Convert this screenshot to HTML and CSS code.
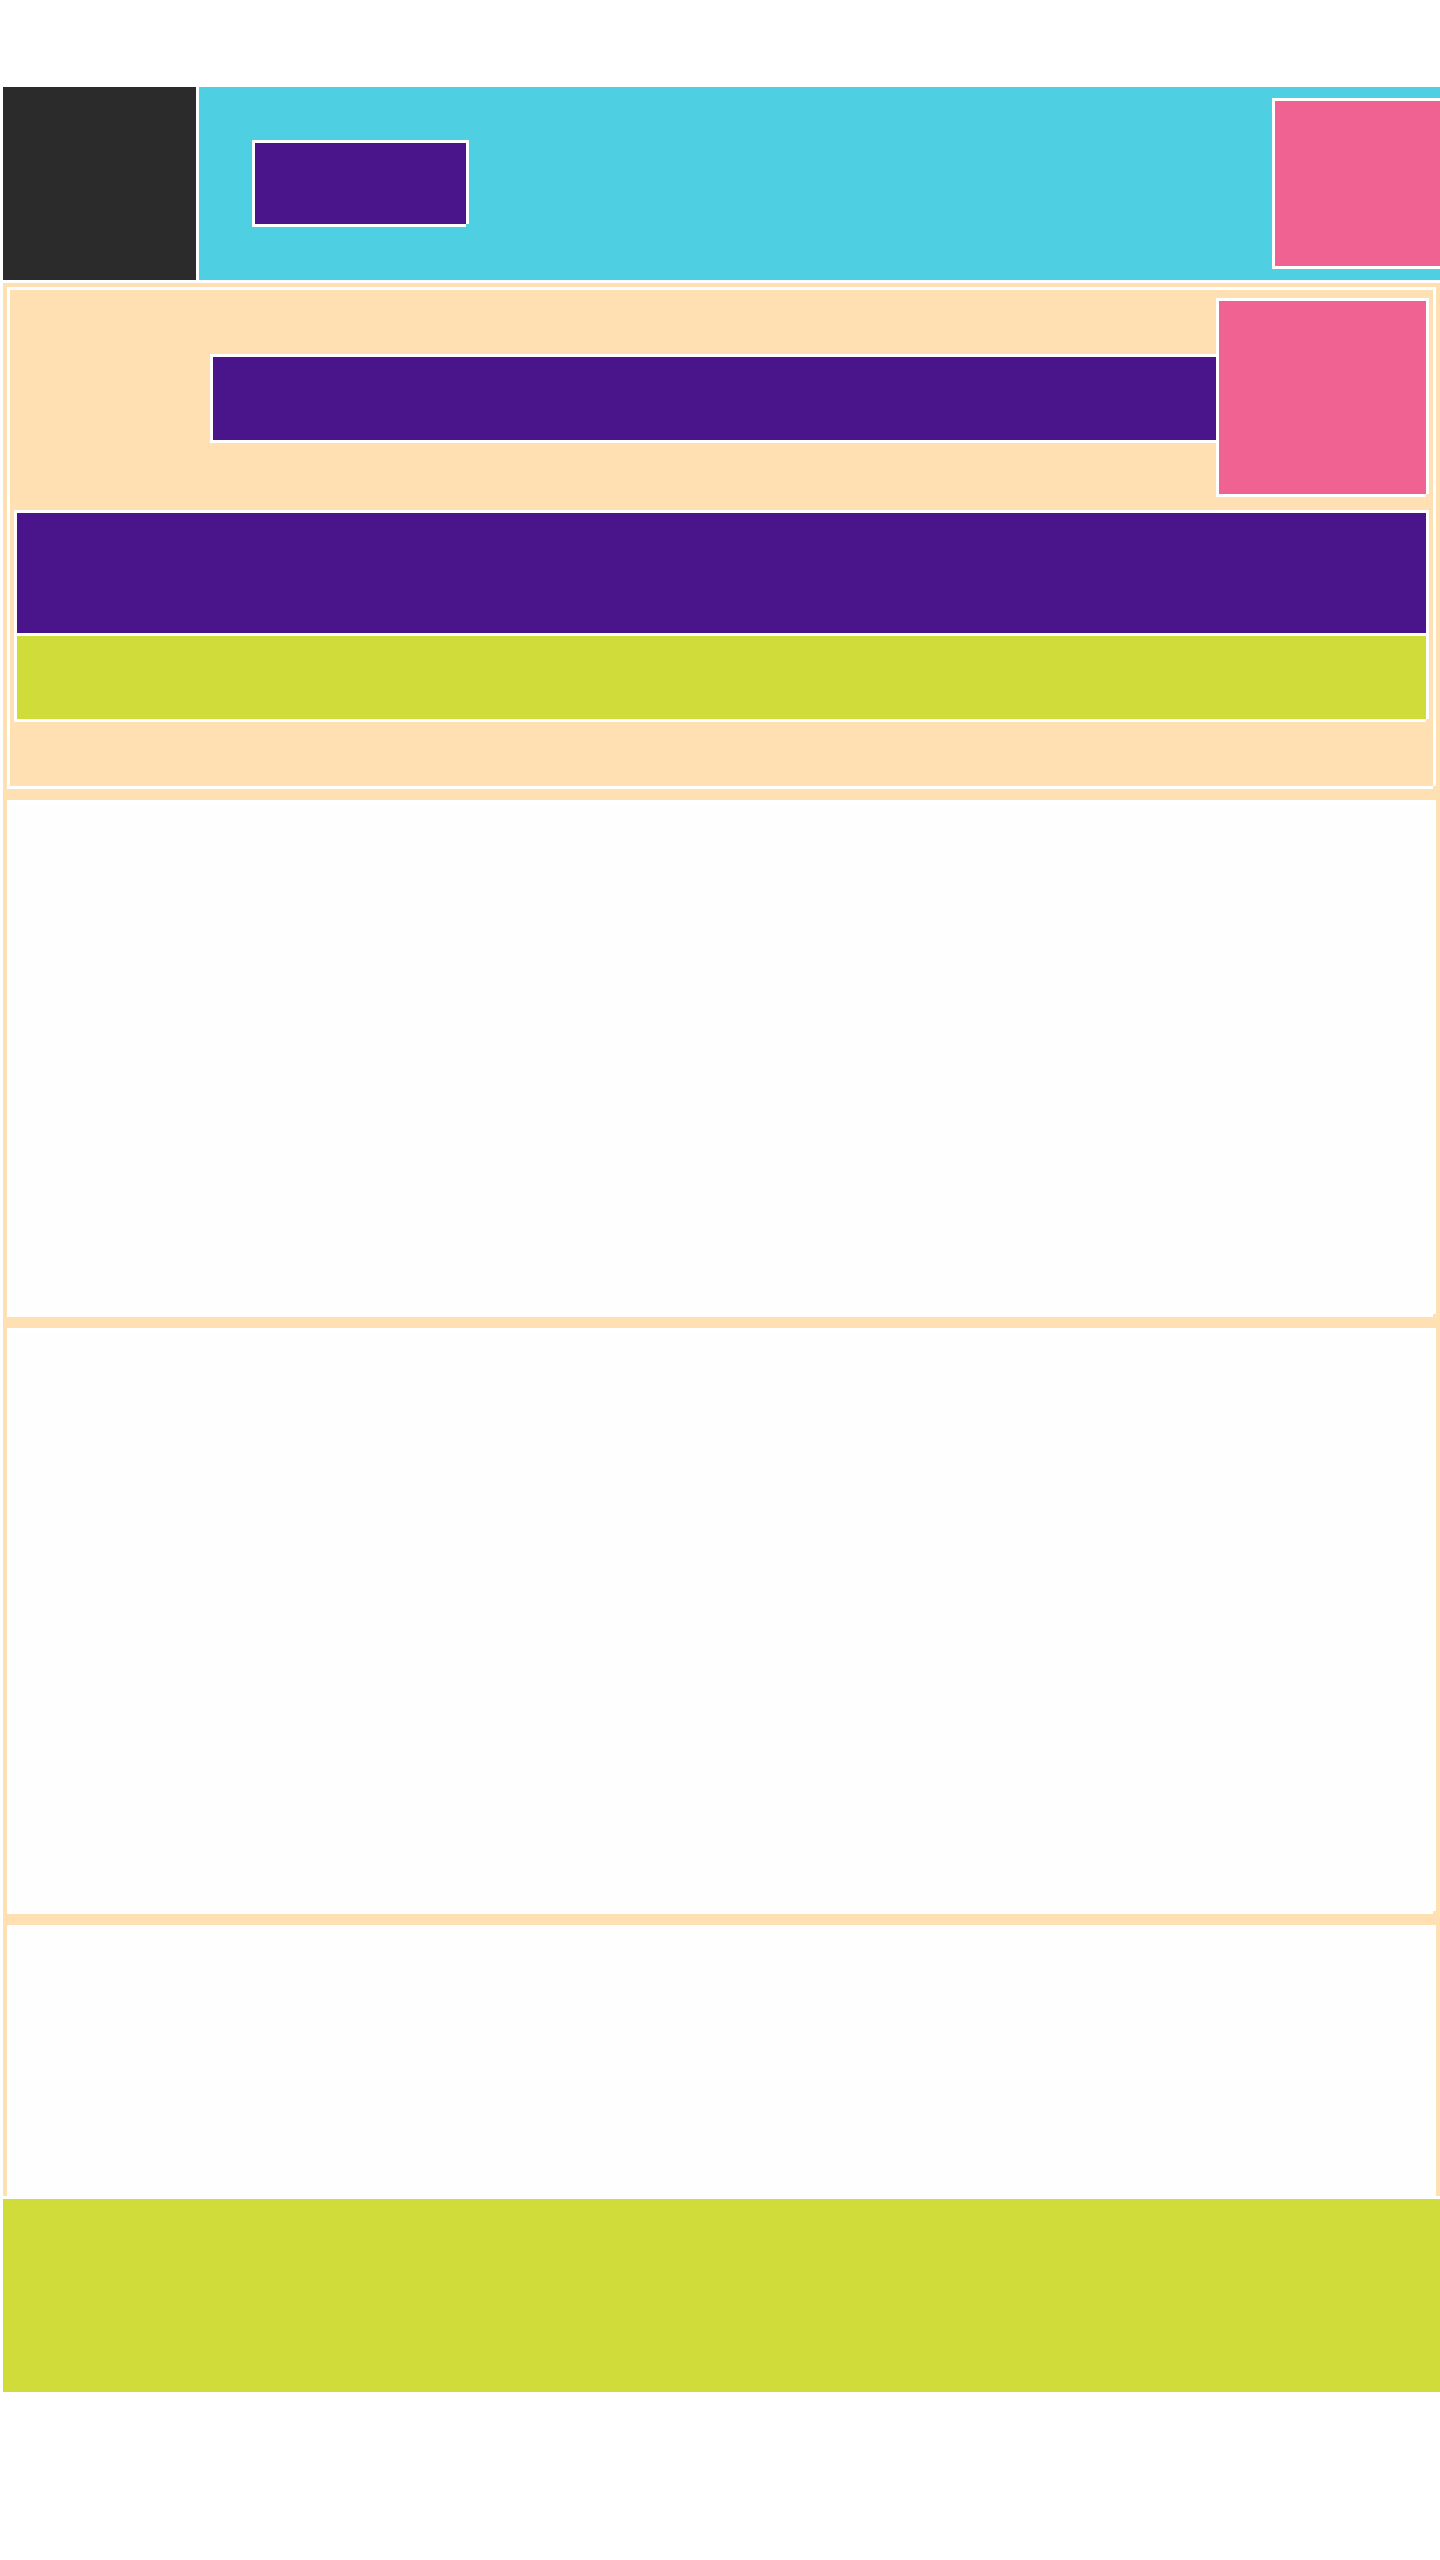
FILE: index.html
```html
<!DOCTYPE html>
<html lang="en">
<head>
<meta charset="utf-8">
<title>Layout</title>
<link rel="stylesheet" href="styles.css">
</head>
<body>
<div class="page">
  <header class="header">
    <div class="brand"></div>
    <div class="topbar">
      <div class="box nav-btn"></div>
      <div class="box top-badge"></div>
    </div>
  </header>
  <main class="main">
    <section class="box hero">
      <div class="hero-row">
        <div class="box hero-title"></div>
        <div class="box hero-image"></div>
      </div>
      <div class="box hero-panel">
        <div class="hero-panel-top"></div>
        <div class="hero-panel-bottom"></div>
      </div>
    </section>
    <section class="box card card-1"></section>
    <section class="box card card-2"></section>
    <section class="box card card-3"></section>
  </main>
  <footer class="footer"></footer>
</div>
</body>
</html>
```

FILE: styles.css
```css
html, body {
  margin: 0;
  padding: 0;
  background: #ffffff;
  overflow-x: hidden;
}

.page {
  width: 1440px;
  box-sizing: border-box;
  padding: 87px 0 0 3px;
  min-height: 2560px;
}

.box {
  box-sizing: border-box;
  border-top: 3px solid #ffffff;
  border-left: 3px solid #ffffff;
  box-shadow: 3px 0 0 0 #ffffff, 0 3px 0 0 #ffffff;
}

/* header */
.header {
  display: flex;
  gap: 3px;
  height: 193px;
  margin-bottom: 3px;
}

.brand {
  width: 193px;
  flex-shrink: 0;
  background: #2b2b2b;
}

.topbar {
  flex: 1;
  display: flex;
  align-items: flex-start;
  padding-left: 53px;
  background: #4fd0e2;
  overflow: hidden;
}

.nav-btn {
  width: 214px;
  height: 84px;
  margin-top: 53px;
  flex-shrink: 0;
  background: #4a158b;
}

.top-badge {
  width: 200px;
  height: 168px;
  margin-top: 11px;
  margin-left: 806px;
  flex-shrink: 0;
  background: #f06292;
}

/* main peach container */
.main {
  box-sizing: border-box;
  width: 1437px;
  background: #fee0b2;
  padding: 4px 4px 0 4px;
  display: flex;
  flex-direction: column;
  gap: 14px;
  margin-bottom: 3px;
  overflow: hidden;
}

.hero {
  width: 1426px;
  height: 499px;
  flex-shrink: 0;
  background: #fee0b2;
  padding: 8px 7px 0 4px;
}

.hero-row {
  display: flex;
  align-items: flex-start;
  height: 196px;
}

.hero-title {
  flex: 1;
  height: 86px;
  margin-left: 196px;
  margin-top: 56px;
  background: #4a158b;
}

.hero-image {
  width: 210px;
  height: 196px;
  flex-shrink: 0;
  background: #f06292;
}

.hero-panel {
  margin-top: 16px;
  height: 209px;
  display: flex;
  flex-direction: column;
  gap: 3px;
  background: #ffffff;
}

.hero-panel-top {
  height: 120px;
  background: #4a158b;
}

.hero-panel-bottom {
  flex: 1;
  background: #cfdc39;
}

.card {
  width: 1426px;
  flex-shrink: 0;
  background: #fefefe;
}

.card-1 { height: 514px; }
.card-2 { height: 583px; }
.card-3 { height: 271px; }

/* footer */
.footer {
  height: 193px;
  background: #cfdc39;
}
```
